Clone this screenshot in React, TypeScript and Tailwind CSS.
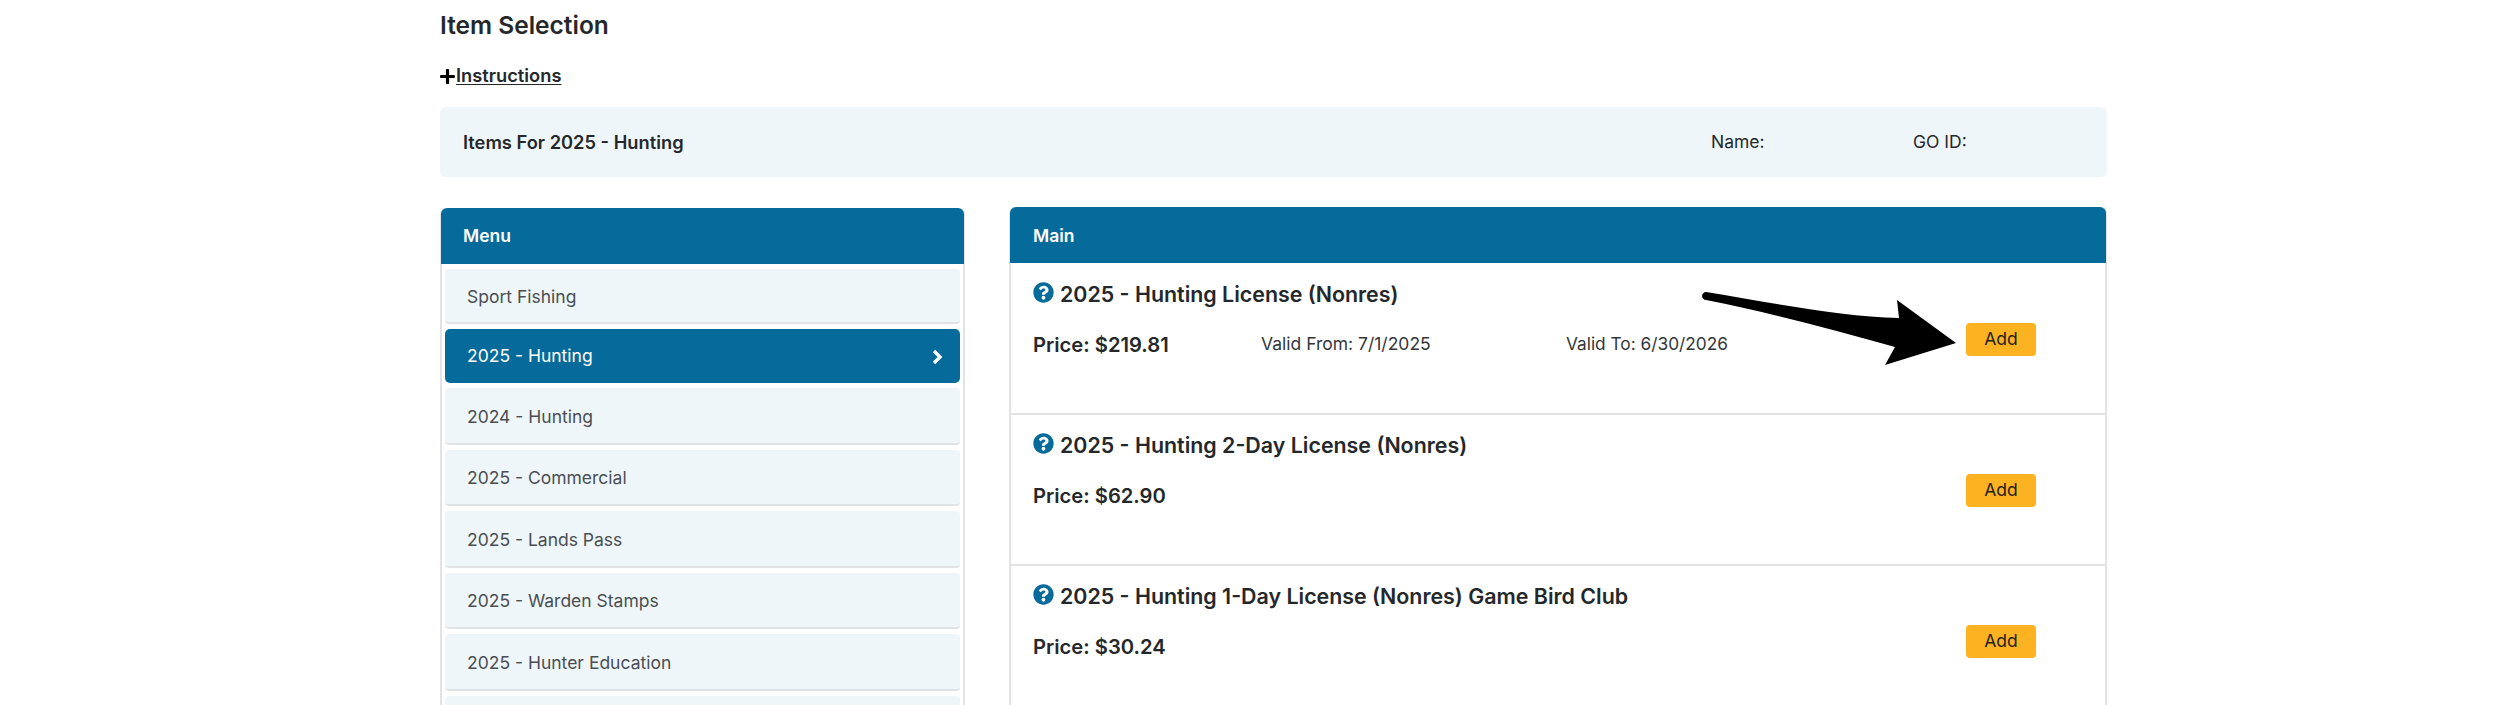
import React from 'react';
import { FaPlus, FaQuestionCircle } from 'react-icons/fa';

// last entry is cut off by the bottom of the page, only its top edge shows
const MENU = [
  'Sport Fishing',
  '2025 - Hunting',
  '2024 - Hunting',
  '2025 - Commercial',
  '2025 - Lands Pass',
  '2025 - Warden Stamps',
  '2025 - Hunter Education',
  '',
];

const ITEMS = [
  { title: '2025 - Hunting License (Nonres)', price: '$219.81', from: '7/1/2025', to: '6/30/2026' },
  { title: '2025 - Hunting 2-Day License (Nonres)', price: '$62.90' },
  { title: '2025 - Hunting 1-Day License (Nonres) Game Bird Club', price: '$30.24' },
];

function Arrow() {
  return (
    <svg className="absolute left-[691px] top-[85px] pointer-events-none" width="260" height="73" viewBox="0 0 260 73">
      <path
        d="M4 0 C2 0 0 2 0 4 C0 6 2 8 4 8 C60 19 130 37 193 55 L183 73 L254 51 L195 8 L197 26 C140 25 70 11 4 0 Z"
        fill="#000"
      />
    </svg>
  );
}

function Chevron() {
  return (
    <svg width="12" height="16" viewBox="0 0 12 16" fill="none">
      <path d="M3 2 L9 8 L3 14" stroke="#fff" strokeWidth="3.4" />
    </svg>
  );
}

function ItemRow({ item }: { item: (typeof ITEMS)[number] }) {
  return (
    <div className="h-[151px] border-b-2 border-[#e3e3e3] pt-[15px] pl-[22px] pr-[69px]">
      <div className="flex items-center h-[30px] mb-[15px]">
        <FaQuestionCircle className="text-[#066a9b] text-[21px] mr-[6px] -mt-[3px]" />
        <h3 className="text-[21.4px] font-semibold text-[#25282b]">{item.title}</h3>
      </div>
      <div className="flex items-start">
        <div className="w-[228px] mt-[6px] h-[30px] leading-[30px] text-[20.2px] font-semibold text-[#25282b]">
          Price: {item.price}
        </div>
        {item.from && (
          <div className="w-[305px] mt-[5px] h-[30px] leading-[30px] text-[17.5px] text-[#33373a]">
            Valid From: {item.from}
          </div>
        )}
        {item.to && (
          <div className="mt-[5px] h-[30px] leading-[30px] text-[17.3px] text-[#33373a]">
            Valid To: {item.to}
          </div>
        )}
        <button className="ml-auto w-[70px] h-[33px] -mt-[1px] rounded-[4px] bg-[#fdb321] text-[17.5px] text-[#24211a]">
          Add
        </button>
      </div>
    </div>
  );
}

export default function App() {
  return (
    <div className="h-[705px] overflow-hidden bg-white pl-[440px] font-['Inter',sans-serif] text-[#25282b]">
      <div className="w-[1667px]">
        <h1 className="h-[25px] mt-[13px] leading-[25px] text-[24.5px] font-semibold">Item Selection</h1>

        <div className="flex items-center h-[24px] mt-[26px]">
          <FaPlus className="-ml-[1px] text-[17px] text-black" />
          <a className="text-[18.3px] font-semibold underline underline-offset-2">Instructions</a>
        </div>

        <div className="flex items-center h-[70px] mt-[19px] pl-[23px] pt-[1px] rounded-[6px] bg-[#eef6fa] text-[17.5px]">
          <span className="w-[1248px] text-[18.3px] font-semibold">Items For 2025 - Hunting</span>
          <span className="w-[202px]">Name:</span>
          <span>GO ID:</span>
        </div>

        <div className="flex gap-[44px] mt-[30px]">
          <aside className="w-[525px] shrink-0 mt-[1px] border-x-2 border-[#e3e3e3] rounded-t-[6px] h-[600px]">
            <div className="-mx-[1px] flex items-center h-[56px] pl-[22px] pt-[1px] rounded-t-[6px] bg-[#066a9b] text-[17.5px] font-semibold text-white">
              Menu
            </div>
            <ul className="flex flex-col gap-[5px] px-[3px] pt-[5px]">
              {MENU.map((m, i) => {
                const active = m === '2025 - Hunting';
                return (
                  <li
                    key={i}
                    className={
                      active
                        ? 'flex items-center justify-between h-[54px] pt-[1px] pl-[22px] pr-[17px] rounded-[5px] bg-[#066a9b] text-[17.5px] text-white'
                        : i === 0
                          ? 'flex items-center h-[55px] pt-[3px] px-[22px] rounded-[4px] bg-[#eef6fa] border-b-2 border-[#e0e3e5] text-[17.5px] text-[#4a4e52]'
                          : 'flex items-center h-[56.5px] pt-[3px] px-[22px] rounded-[4px] bg-[#eef6fa] border-b-2 border-[#e0e3e5] text-[17.5px] text-[#4a4e52]'
                    }
                  >
                    {m}
                    {active && <Chevron />}
                  </li>
                );
              })}
            </ul>
          </aside>

          <main className="relative flex-1 border-x-2 border-[#e3e3e3] rounded-t-[6px] h-[600px]">
            <div className="-mx-[1px] flex items-center h-[56px] pl-[23px] pt-[2px] rounded-t-[6px] bg-[#066a9b] text-[17.5px] font-semibold text-white">
              Main
            </div>
            <div className="pt-[1px]">
              {ITEMS.map((item) => (
                <ItemRow key={item.title} item={item} />
              ))}
            </div>
            <Arrow />
          </main>
        </div>
      </div>
    </div>
  );
}
